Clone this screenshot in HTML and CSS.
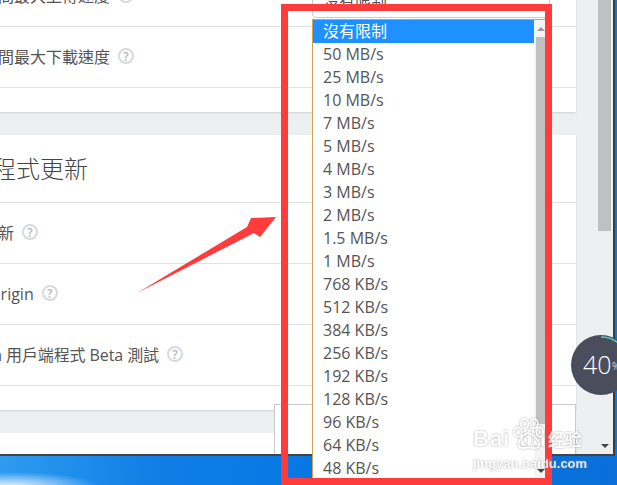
FILE: index.html
```html
<!DOCTYPE html>
<html lang="zh-TW">

<head>
  <meta charset="UTF-8">
  <meta name="viewport" content="width=device-width, initial-scale=1.0">
  <title>應用程式設定</title>
  <link rel="stylesheet" href="styles.css">
</head>

<body>
  <div class="window">
    <div class="content">
      <section class="card card-first">
        <div class="row"><span class="label">遊戲時間最大上傳速度</span><span class="help">?</span></div>
        <div class="row"><span class="label">遊戲時間最大下載速度</span><span class="help">?</span></div>
      </section>

      <section class="card">
        <h2 class="card-title">應用程式更新</h2>
        <div class="row"><span class="label">自動更新</span><span class="help">?</span></div>
        <div class="row"><span class="label label-origin">更新 Origin</span><span class="help">?</span></div>
        <div class="row"><span class="label label-beta">Origin 用戶端程式 Beta 測試</span><span class="help">?</span></div>
      </section>

      <section class="card card-last"></section>
    </div>
    <div class="scrollbar">
      <div class="scroll-thumb"></div>
      <div class="scroll-rest"><span class="arrow-down"></span></div>
    </div>
  </div>
  <div class="taskbar"></div>

  <div class="notice-box"></div>

  <div class="select-box">沒有限制</div>
  <div class="dropdown">
    <ul class="options">
      <li class="selected">沒有限制</li>
      <li>50 MB/s</li>
      <li>25 MB/s</li>
      <li>10 MB/s</li>
      <li>7 MB/s</li>
      <li>5 MB/s</li>
      <li>4 MB/s</li>
      <li>3 MB/s</li>
      <li>2 MB/s</li>
      <li>1.5 MB/s</li>
      <li>1 MB/s</li>
      <li>768 KB/s</li>
      <li>512 KB/s</li>
      <li>384 KB/s</li>
      <li>256 KB/s</li>
      <li>192 KB/s</li>
      <li>128 KB/s</li>
      <li>96 KB/s</li>
      <li>64 KB/s</li>
      <li>48 KB/s</li>
    </ul>
    <div class="drop-scroll">
      <span class="arrow-up"></span>
      <div class="drop-thumb"></div>
      <span class="arrow-down drop-down-arrow"></span>
    </div>
  </div>

  <div class="red-frame"></div>

  <svg class="red-arrow" width="617" height="485" viewBox="0 0 617 485">
    <polygon points="137,293 247,227 251,218 276,217 260,237 254,233" fill="#ff3b3b" />
  </svg>

  <div class="gauge">
    <svg class="gauge-ring" width="60" height="60" viewBox="0 0 60 60">
      <path d="M30 2 A28 28 0 0 1 52 13" fill="none" stroke="#3fd0c0" stroke-width="1.5" />
      <path d="M57 40 A28 28 0 0 1 52 47" fill="none" stroke="#8fd050" stroke-width="1.5" />
    </svg>
    <span class="gauge-num">40</span><span class="gauge-pct">%</span>
  </div>

  <div class="watermark">
    <div class="wm-logo">
      <span class="wm-bai">Bai</span>
      <svg class="wm-paw" width="35" height="34" viewBox="0 0 36 36">
        <g fill="none" stroke="#fff" stroke-width="2">
          <ellipse cx="8" cy="15" rx="4" ry="5" />
          <ellipse cx="15" cy="6" rx="4" ry="5" />
          <ellipse cx="25" cy="6" rx="4" ry="5" />
          <ellipse cx="31" cy="15" rx="3.5" ry="5" />
          <path d="M18 16 C12 18 7 25 9 30 C11 34 16 31 19 31 C23 31 28 34 30 30 C32 25 25 17 18 16Z" />
        </g>
      </svg>
      <span class="wm-du">du</span>
      <span class="wm-cn">经验</span>
    </div>
    <div class="wm-url">jingyan.baidu.com</div>
  </div>
</body>

</html>
```

FILE: styles.css
```css
* {
  box-sizing: border-box;
}

html,
body {
  margin: 0;
  height: 100%;
}

body {
  position: relative;
  width: 617px;
  height: 485px;
  overflow: hidden;
  font-family: "Open Sans", "Noto Sans CJK TC", sans-serif;
  color: #555;
  background-color: #0a78dc;
}

.window {
  display: flex;
  width: 615px;
  height: 456px;
  overflow: hidden;
  background-color: #ecf0f1;
  border-right: 2px solid #3c3c3c;
  border-bottom: 2px solid #444;
}

.content {
  display: flex;
  flex-direction: column;
  gap: 23px;
  width: 598px;
  padding-right: 22px;
}

.card {
  flex-shrink: 0;
  margin-left: -50px;
  padding-bottom: 24px;
  background-color: #fff;
  box-shadow: 0 1px 2px rgba(0, 0, 0, 0.12);
}

.card-first {
  margin-top: -34px;
}

.card-last {
  height: 60px;
}

.card-title {
  height: 68px;
  margin: 0;
  font-size: 24px;
  font-weight: 300;
  line-height: 68px;
  text-indent: -6px;
  color: #444;
  border-bottom: 1px solid #e0e3e5;
}

.row {
  display: flex;
  align-items: center;
  gap: 8px;
  height: 61px;
  padding-bottom: 2px;
  font-size: 16px;
  border-bottom: 1px solid #e0e3e5;
}

.label-origin {
  margin-left: 2px;
}

.label-beta {
  margin-left: 7px;
  letter-spacing: -0.1px;
}

.help {
  display: block;
  width: 16px;
  height: 16px;
  font-size: 12px;
  font-weight: 600;
  line-height: 13px;
  text-align: center;
  color: #b4b8c0;
  border: 2px solid #d6d9de;
  border-radius: 50%;
}

.scrollbar {
  display: flex;
  flex-direction: column;
  width: 13px;
  background-color: #efefef;
}

.scroll-thumb {
  height: 231px;
  background-color: #c0c0c0;
}

.scroll-rest {
  position: relative;
  flex: 1;
}

.arrow-down,
.arrow-up {
  position: absolute;
  width: 0;
  height: 0;
  border-left: 4px solid transparent;
  border-right: 4px solid transparent;
}

.arrow-down {
  border-top: 4px solid #444;
}

.arrow-up {
  border-bottom: 4px solid #999;
}

.scroll-rest .arrow-down {
  left: 3px;
  bottom: 6px;
}

.taskbar {
  height: 29px;
  background:
    radial-gradient(ellipse 90px 14px at 10px 30px, rgba(255, 255, 255, 0.85), rgba(255, 255, 255, 0) 100%),
    linear-gradient(100deg, #2f9bf0 0, #0f7fe6 25%, #0374e2 60%, #0a6fd8 100%);
}

.notice-box {
  position: absolute;
  left: 274px;
  top: 404px;
  width: 302px;
  height: 50px;
  background-color: #fff;
  border: 1px solid #c8cad2;
  border-bottom: none;
}

.select-box {
  position: absolute;
  left: 312px;
  top: -14px;
  width: 238px;
  height: 32px;
  padding-left: 10px;
  font-size: 16px;
  line-height: 28px;
  color: #555;
  background-color: #fff;
  border: 1px solid #ccc;
  border-radius: 4px;
}

.dropdown {
  position: absolute;
  left: 312px;
  top: 19px;
  display: flex;
  width: 238px;
  height: 462px;
  overflow: hidden;
  background-color: #fff;
  border-top: 1px solid #d2a24c;
  border-left: 1px solid #d2a24c;
}

.options {
  width: 221px;
  margin: 0;
  padding: 0;
  list-style: none;
}

.options li {
  height: 23px;
  padding-left: 10px;
  font-size: 16px;
  line-height: 23px;
  color: #555;
}

.options .selected {
  color: #fff;
  background-color: #1e90ff;
}

.drop-scroll {
  position: relative;
  flex: 1;
  background-color: #f4f4f4;
}

.drop-thumb {
  position: absolute;
  left: 2px;
  right: 0;
  top: 17px;
  height: 387px;
  background-color: #c0c0c0;
}

.arrow-up {
  left: 3px;
  top: 7px;
}

.drop-down-arrow {
  left: 3px;
  top: 449px;
}

.red-frame {
  position: absolute;
  left: 281px;
  top: 4px;
  width: 271px;
  height: 481px;
  border: 7px solid #ff3b3b;
}

.red-arrow {
  position: absolute;
  left: 0;
  top: 0;
}

.gauge {
  position: absolute;
  left: 571px;
  top: 335px;
  width: 60px;
  height: 60px;
  font-weight: 300;
  color: #fff;
  background-color: #4a4e5c;
  border-radius: 50%;
}

.gauge-ring {
  position: absolute;
  left: 0;
  top: 0;
}

.gauge-num {
  position: absolute;
  left: 12px;
  top: 12px;
  font-size: 25px;
  line-height: 34px;
}

.gauge-pct {
  position: absolute;
  left: 41px;
  top: 24px;
  font-size: 10px;
  line-height: 14px;
}

.watermark {
  position: absolute;
  left: 473px;
  top: 418px;
  color: #fff;
  opacity: 0.85;
  text-shadow: 0 0 2px #888;
}

.wm-logo {
  display: flex;
  align-items: flex-end;
  height: 34px;
  font-family: "Liberation Sans", sans-serif;
  font-size: 22px;
  font-weight: 700;
  line-height: 26px;
}

.wm-bai {
  width: 37px;
  letter-spacing: 1px;
}

.wm-paw {
  margin-right: -26px;
  filter: drop-shadow(0 0 1px #999);
}

.wm-du {
  width: 29px;
}

.wm-cn {
  font-family: "Noto Sans CJK SC", sans-serif;
  font-size: 17px;
}

.wm-url {
  margin-top: 3px;
  font-family: "Liberation Sans", sans-serif;
  font-size: 13px;
  font-weight: 700;
  line-height: 18px;
}
```
